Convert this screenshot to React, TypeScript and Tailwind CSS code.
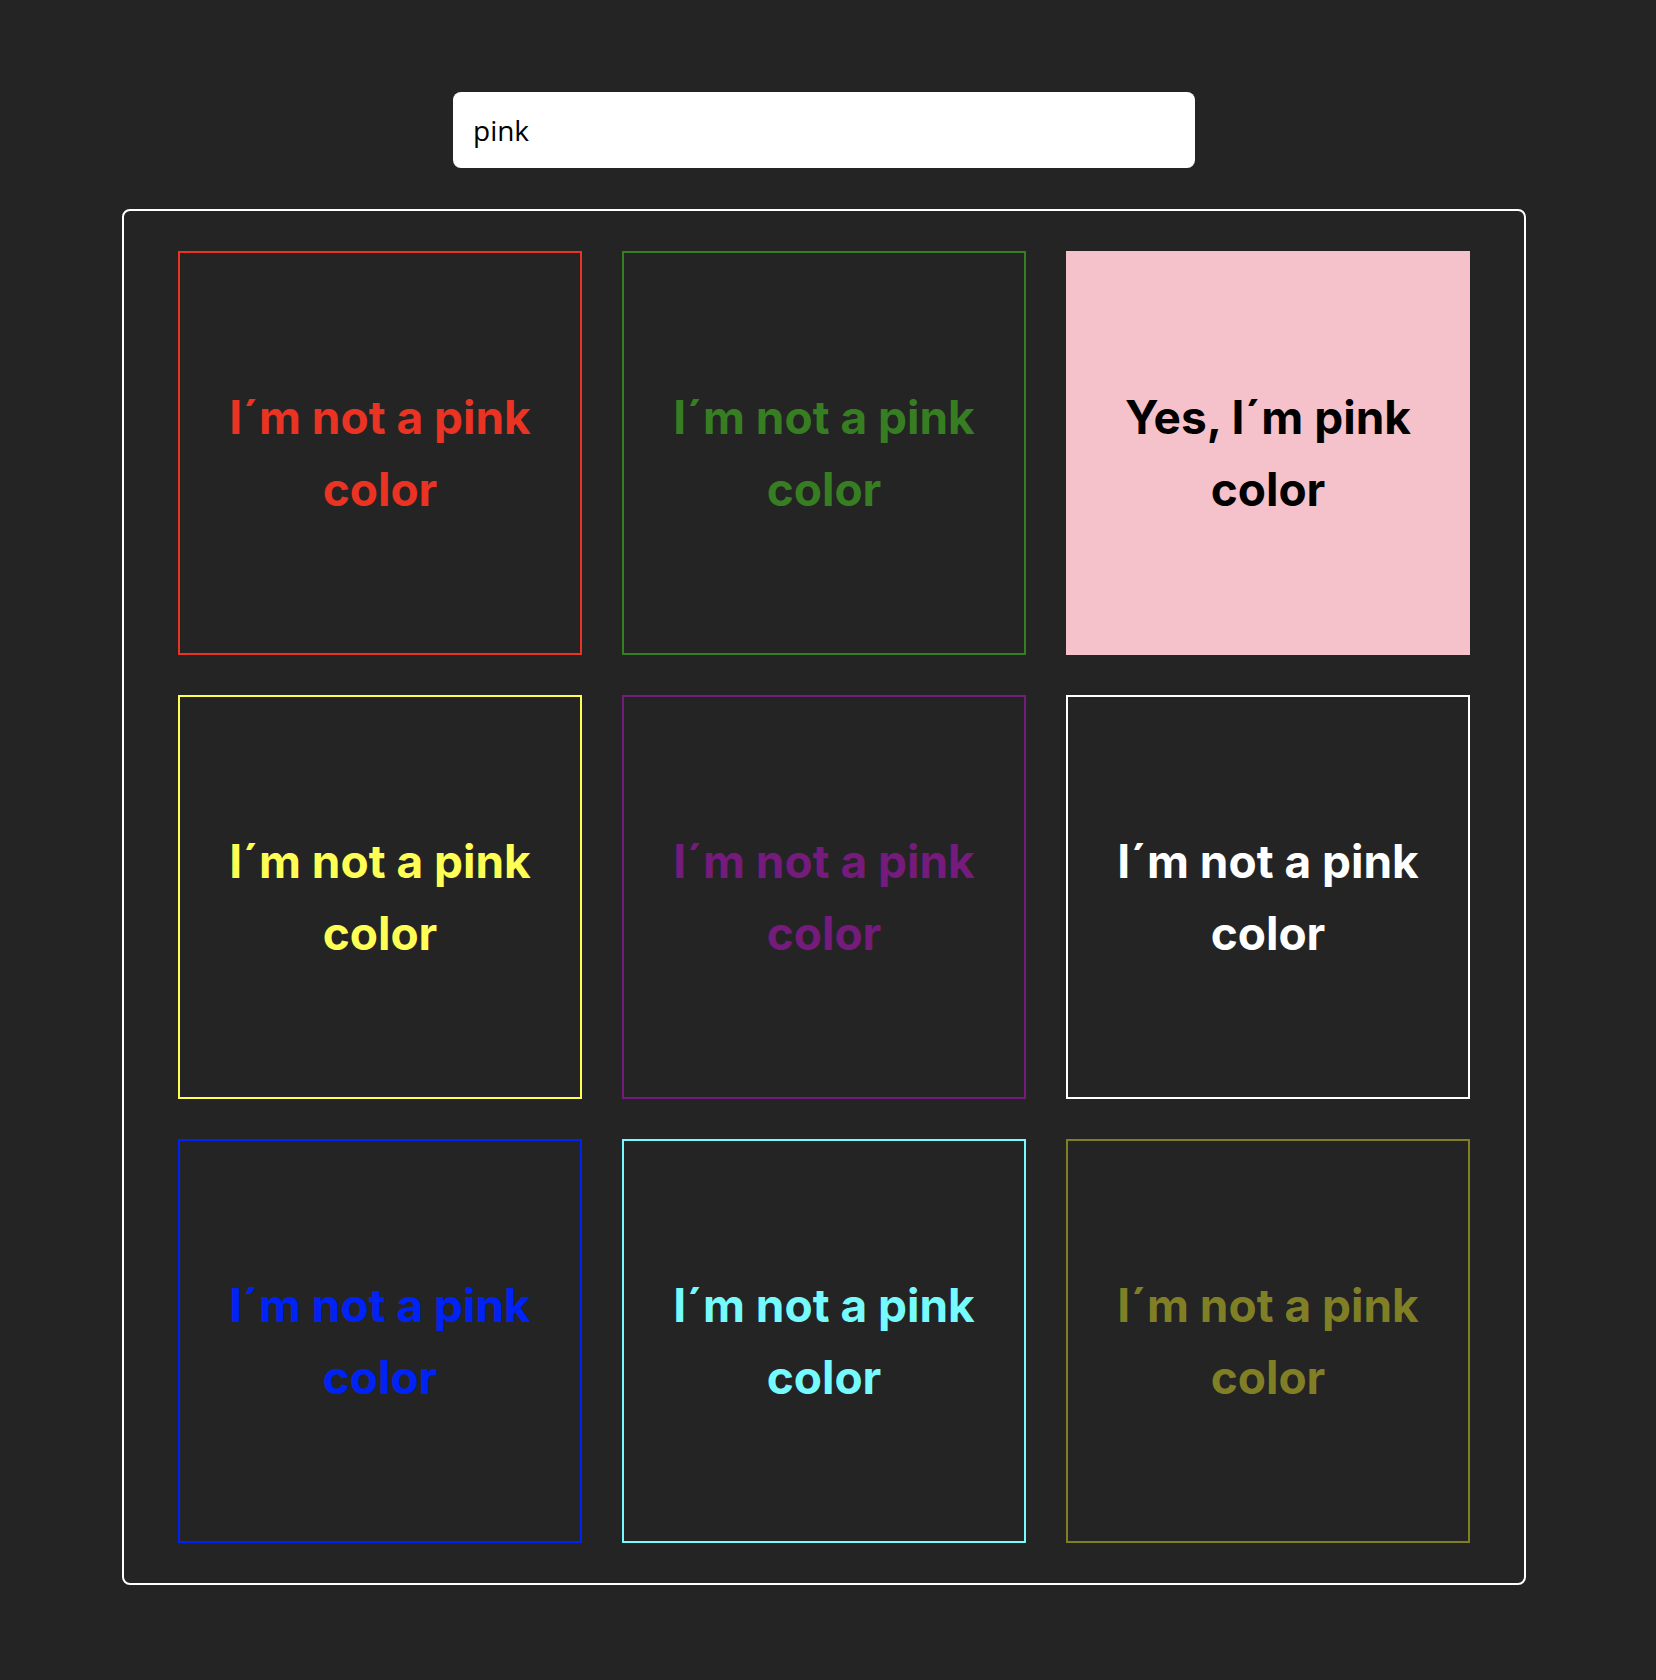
import { useState } from "react"

type Swatch = {
  name: string
  color: string
}

const swatches: Swatch[] = [
  { name: "red", color: "border-[#ea3323] text-[#ea3323]" },
  { name: "green", color: "border-[#377e22] text-[#377e22]" },
  { name: "pink", color: "border-[#f5c2cb] bg-[#f5c2cb] text-black" },
  { name: "yellow", color: "border-[#fffe54] text-[#fffe54]" },
  { name: "purple", color: "border-[#741b7c] text-[#741b7c]" },
  { name: "white", color: "border-white text-white" },
  { name: "blue", color: "border-[#0023f5] text-[#0023f5]" },
  { name: "cyan", color: "border-[#75fbfd] text-[#75fbfd]" },
  { name: "olive", color: "border-[#817f26] text-[#817f26]" },
]

const ColorBox = ({ swatch, query }: { swatch: Swatch; query: string }) => {
  const isPink = swatch.name === "pink"
  return (
    <div
      className={`w-[404px] h-[404px] border-2 flex items-center justify-center px-8 text-center font-bold text-[46px] leading-[72px] ${swatch.color}`}
    >
      {isPink && query === "pink" ? "Yes, I´m pink color" : "I´m not a pink color"}
    </div>
  )
}

export default function App() {
  const [query, setQuery] = useState("pink")

  return (
    <div
      className="min-h-[1680px] bg-[#242424] w-full"
      style={{ fontFamily: "Inter, 'Noto Sans', sans-serif" }}
    >
      <div className="w-[1648px] flex flex-col items-center pt-[92px]">
        <input
          type="text"
          value={query}
          autoFocus
          onChange={(e) => setQuery(e.target.value)}
          className="w-[742px] h-[76px] rounded-lg bg-white px-5 text-[28px] text-black outline-none"
          style={{ fontFamily: "'Open Sans', 'Noto Sans', sans-serif", caretColor: "black" }}
        />
        <div className="mt-[41px] w-[1404px] border-2 border-white rounded-lg py-10 grid grid-cols-[repeat(3,404px)] justify-center gap-10">
          {swatches.map((swatch) => (
            <ColorBox key={swatch.name} swatch={swatch} query={query} />
          ))}
        </div>
      </div>
    </div>
  )
}
